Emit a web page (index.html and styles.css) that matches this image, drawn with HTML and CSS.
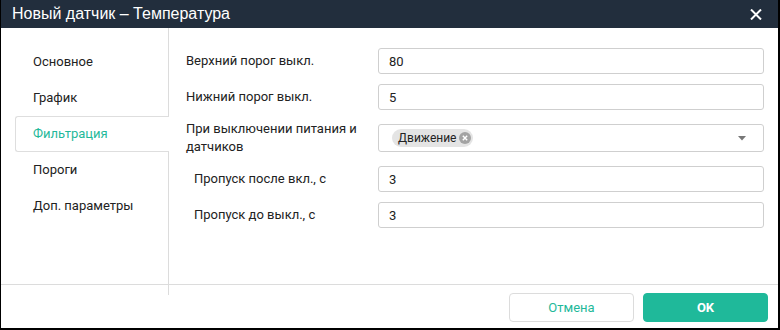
FILE: index.html
```html
<!DOCTYPE html>
<html>
<head>
<meta charset="utf-8">
<link rel="stylesheet" href="styles.css">
</head>
<body>
<div class="dialog">
  <div class="header">
    <div class="title">Новый датчик – Температура</div>
    <svg class="close" width="12" height="11" viewBox="0 0 12 11"><path d="M1 0.5 L11 10.5 M11 0.5 L1 10.5" stroke="#fff" stroke-width="2"/></svg>
  </div>
  <div class="main">
    <div class="sidebar">
      <div class="nav-item">Основное</div>
      <div class="nav-item">График</div>
      <div class="nav-item active">Фильтрация</div>
      <div class="nav-item">Пороги</div>
      <div class="nav-item">Доп. параметры</div>
    </div>
    <div class="content">
      <div class="row">
        <div class="label">Верхний порог выкл.</div>
        <div class="input">80</div>
      </div>
      <div class="row">
        <div class="label">Нижний порог выкл.</div>
        <div class="input">5</div>
      </div>
      <div class="row tall">
        <div class="label">При выключении питания и<br>датчиков</div>
        <div class="input select">
          <span class="chip">Движение<svg class="chip-x" width="12" height="12" viewBox="0 0 12 12"><circle cx="6" cy="6" r="6" fill="#a3a3a3"/><path d="M3.8 3.8 L8.2 8.2 M8.2 3.8 L3.8 8.2" stroke="#fff" stroke-width="1.4"/></svg></span>
          <svg class="arrow" width="8" height="5" viewBox="0 0 8 5"><path d="M0 0 L8 0 L4 4.5 Z" fill="#777"/></svg>
        </div>
      </div>
      <div class="row">
        <div class="label sub">Пропуск после вкл., с</div>
        <div class="input">3</div>
      </div>
      <div class="row">
        <div class="label sub">Пропуск до выкл., с</div>
        <div class="input">3</div>
      </div>
    </div>
  </div>
  <div class="footer">
    <button class="btn cancel">Отмена</button>
    <button class="btn ok">OK</button>
  </div>
</div>
</body>
</html>
```

FILE: styles.css
```css
* { box-sizing: border-box; }
html, body { margin: 0; padding: 0; background: #fff; }
.dialog {
  width: 780px;
  height: 330px;
  border-left: 1px solid #000;
  border-right: 2px solid #000;
  border-bottom: 2px solid #000;
  display: flex;
  flex-direction: column;
  font-family: Roboto, "Liberation Sans", sans-serif;
  font-size: 13px;
  color: #222;
}
.header {
  height: 28px;
  background: #222e3d;
  display: flex;
  align-items: center;
  justify-content: space-between;
  padding: 0 16px 0 11px;
  flex: none;
}
.title {
  font-family: "Liberation Sans", Arial, sans-serif;
  font-size: 16px;
  color: #fff;
}
.close { display: block; }
.main {
  display: flex;
  height: 267px;
  flex: none;
}
.sidebar {
  width: 168px;
  border-right: 1px solid #dcdcdc;
  padding-top: 16px;
  padding-left: 14px;
  flex: none;
}
.nav-item {
  height: 36px;
  line-height: 34px;
  padding-left: 17px;
  border: 1px solid transparent;
  border-right: none;
}
.nav-item.active {
  color: #1fb99a;
  background: #fff;
  border-color: #dedede;
  border-radius: 3px 0 0 3px;
  margin-right: -1px;
  position: relative;
}
.content {
  flex: 1;
  padding: 20px 14px 0 17px;
  display: flex;
  flex-direction: column;
  gap: 10px;
}
.row {
  display: flex;
  align-items: center;
  height: 26px;
}
.row.tall { height: 36px; }
.label {
  width: 192px;
  line-height: 18px;
  flex: none;
}
.label.sub { padding-left: 8px; }
.input {
  flex: 1;
  height: 26px;
  border: 1px solid #cfcfcf;
  border-radius: 3px;
  padding-left: 10px;
  display: flex;
  align-items: center;
}
.input.select {
  height: 28px;
  padding-left: 13px;
  padding-right: 17px;
  justify-content: space-between;
}
.chip {
  display: inline-flex;
  align-items: center;
  height: 18px;
  background: #e4e4e4;
  border-radius: 9px;
  padding: 0 2px 0 6px;
  font-size: 12px;
  gap: 3px;
}
.chip-x { display: block; }
.arrow { display: block; }
.footer {
  margin-top: -11px;
  border-top: 1px solid #dcdcdc;
  flex: 1;
  display: flex;
  justify-content: flex-end;
  align-items: flex-start;
  padding: 8px 10px 0 0;
  gap: 9px;
}
.btn {
  width: 125px;
  height: 29px;
  border-radius: 4px;
  font-family: Roboto, "Liberation Sans", sans-serif;
  font-size: 13px;
  cursor: pointer;
}
.btn.cancel {
  background: #fff;
  border: 1px solid #dcdcdc;
  color: #1fb99a;
}
.btn.ok {
  background: #1fb99a;
  border: 1px solid #1fb99a;
  color: #fff;
  font-weight: bold;
}
```
